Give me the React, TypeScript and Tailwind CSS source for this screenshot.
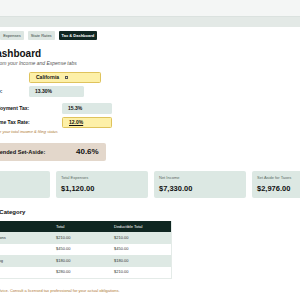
import React from "react";

const tabs = [
  { label: "Income", active: false },
  { label: "Expenses", active: false },
  { label: "State Rates", active: false },
  { label: "Tax & Dashboard", active: true },
];

const cards = [
  { label: "Total Income", value: "$8,450.00" },
  { label: "Total Expenses", value: "$1,120.00" },
  { label: "Net Income", value: "$7,330.00" },
  { label: "Set Aside for Taxes", value: "$2,976.00" },
];

const rows = [
  { cat: "Software & Subscriptions", total: "$210.00", ded: "$210.00" },
  { cat: "Equipment", total: "$450.00", ded: "$450.00" },
  { cat: "Marketing & Advertising", total: "$180.00", ded: "$180.00" },
  { cat: "Meals", total: "$280.00", ded: "$210.00" },
];

export default function App() {
  return (
    <div className="w-[300px] h-[300px] overflow-hidden bg-white font-['Liberation_Sans',Arial,sans-serif] text-[#111]">
      <div className="-ml-[42px] w-[400px]">
        <div className="h-[16px] bg-[#f4f6f5]" />
        <div className="h-[11px] bg-[#e3e9e6] border-t border-[#dbe2df]" />
        <div className="mt-[4px] flex gap-[4px] pl-[19px]">
          {tabs.map((t) =>
            t.active ? (
              <div key={t.label} className="h-[9px] px-[3px] leading-[9px] text-[4px] font-bold rounded-[1px] bg-[#0f2621] text-white">
                {t.label}
              </div>
            ) : (
              <div key={t.label} className="h-[9px] px-[3px] leading-[9px] text-[4px] rounded-[1px] bg-[#dde6e2] text-[#33433e]">
                {t.label}
              </div>
            )
          )}
        </div>

        <h1 className="mt-[8px] -ml-[5px] text-[10px] leading-[12px] font-bold text-[#111]">My Tax Dashboard</h1>
        <p className="text-[5px] leading-[6px] italic text-[#555]">Totals calculated from your Income and Expense tabs</p>

        <div className="mt-[6px] flex items-center h-[11px]">
          <div className="w-[71px] text-[5px] font-bold">State:</div>
          <div className="w-[72px] h-[11px] pl-[6px] flex items-center gap-[6px] rounded-[1.5px] border border-[#dfc35c] bg-[#fdf0a8] text-[5px] font-bold">
            <span>California</span>
            <span className="inline-block w-[2.5px] h-[3.5px] border-[0.6px] border-[#555]" />
          </div>
        </div>
        <div className="mt-[3px] flex items-center h-[11px]">
          <div className="-ml-[4px] w-[75px] text-[5px] font-bold">Effective State Rate:</div>
          <div className="w-[55px] h-[11px] pl-[6px] flex items-center rounded-[1.5px] bg-[#dce8e4] text-[5px] font-bold">13.30%</div>
        </div>

        <div className="pl-[19px]">
          <div className="mt-[6px] flex items-center h-[11px]">
            <div className="w-[85px] text-[5px] font-bold">Self-Employment Tax:</div>
            <div className="w-[50px] h-[11px] pl-[6px] flex items-center rounded-[1.5px] bg-[#dce8e4] text-[5px] font-bold">15.3%</div>
          </div>
          <div className="mt-[3px] flex items-center h-[11px]">
            <div className="w-[85px] text-[5px] font-bold">Fed. Income Tax Rate:</div>
            <div className="w-[50px] h-[11px] pl-[6px] flex items-center rounded-[1.5px] border border-[#dfc35c] bg-[#fdf0a8] text-[5px] font-bold underline">12.0%</div>
          </div>
          <p className="mt-[1px] ml-[5px] text-[4px] leading-[5px] italic text-[#b07a35]">Bracket for your total income &amp; filing status</p>
        </div>

        <div className="mt-[9px] ml-[10px] w-[138px] h-[18px] pl-[8px] flex items-center rounded-[2px] bg-[#e3d7cb]">
          <div className="w-[100px] text-[5.6px] font-bold">Recommended Set-Aside:</div>
          <div className="text-[8px] font-bold">40.6%</div>
        </div>

        <div className="mt-[10px] grid grid-cols-[92px_92px_92px_92px] gap-[6px]">
          {cards.map((c) => (
            <div key={c.label} className="h-[27px] rounded-[2px] bg-[#dce8e3] px-[5px] pt-[4px]">
              <div className="text-[4px] leading-[5px] text-[#5a6a65]">{c.label}</div>
              <div className="mt-[4px] text-[7.5px] leading-[9px] font-bold text-[#111]">{c.value}</div>
            </div>
          ))}
        </div>

        <h2 className="mt-[10px] ml-[3px] text-[6px] leading-[8px] font-bold">Expenses by Category</h2>

        <div className="mt-[5px] w-[214px] border-r border-b border-[#e4ebe8]">
          <div className="grid grid-cols-[95px_58px_61px] h-[11px] items-center bg-[#0f2621] text-white text-[4px]">
            <div className="pl-[3px]">Category</div>
            <div className="pl-[3px]">Total</div>
            <div className="pl-[3px]">Deductible Total</div>
          </div>
          {rows.map((r, i) => (
            <div
              key={r.cat}
              className={
                i % 2 === 0
                  ? "grid grid-cols-[95px_58px_61px] h-[11.5px] items-center bg-[#dee9e4] text-[4px] text-[#333]"
                  : "grid grid-cols-[95px_58px_61px] h-[11.5px] items-center bg-white text-[4px] text-[#333]"
              }
            >
              <div className="pl-[3px]">{r.cat}</div>
              <div className="pl-[3px]">{r.total}</div>
              <div className="pl-[3px]">{r.ded}</div>
            </div>
          ))}
        </div>

        <p className="mt-[8.5px] ml-[3px] text-[4px] leading-[5px] text-[#b07a35]">
          Not tax preparation advice. Consult a licensed tax professional for your actual obligations.
        </p>
      </div>
    </div>
  );
}
